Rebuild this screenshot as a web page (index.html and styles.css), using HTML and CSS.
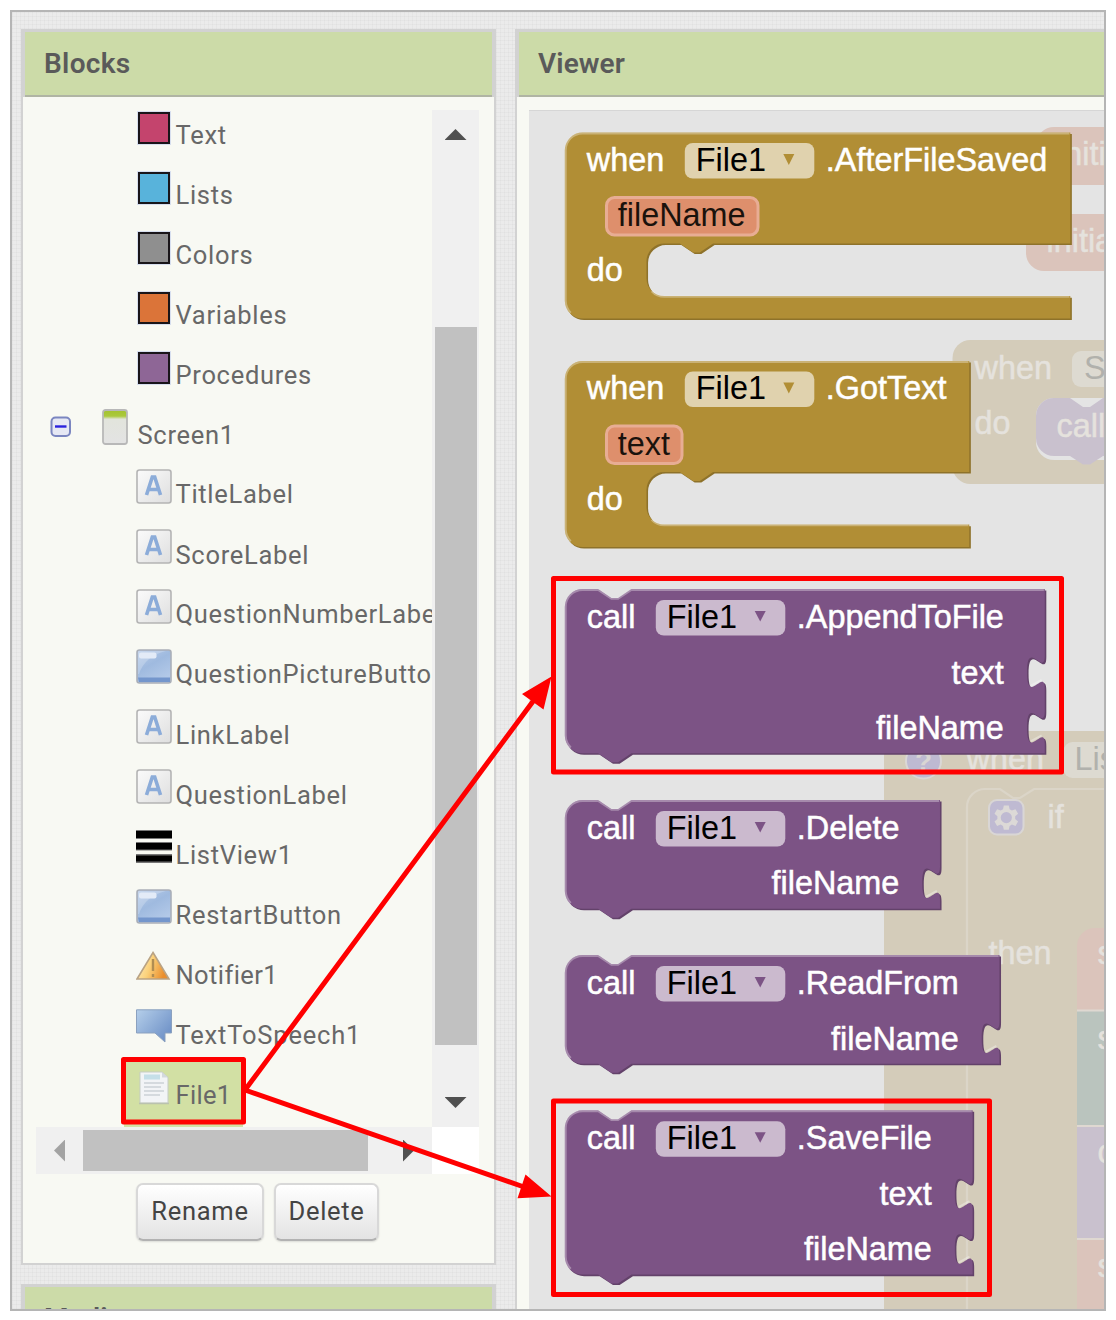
FILE: index.html
```html
<!DOCTYPE html>
<html lang="en">
<head>
<meta charset="utf-8">
<title>Blocks editor</title>
<link rel="stylesheet" href="styles.css">
</head>
<body>
<svg class="defs" width="0" height="0" aria-hidden="true">
  <defs>
    <linearGradient id="g-label" x1="0" y1="0" x2="1" y2="1"><stop offset="0" stop-color="#fbfbfb"/><stop offset="1" stop-color="#dedede"/></linearGradient>
    <linearGradient id="g-btn" x1="0" y1="0" x2="0.6" y2="1"><stop offset="0" stop-color="#b9cde9"/><stop offset=".5" stop-color="#9fbadf"/><stop offset="1" stop-color="#b3c9e8"/></linearGradient>
    <linearGradient id="g-bubble" x1="0" y1="0" x2="1" y2=".8"><stop offset="0" stop-color="#b5cfea"/><stop offset="1" stop-color="#6c8fc6"/></linearGradient>
    <linearGradient id="g-warn" x1="0" y1="0" x2="1" y2=".3"><stop offset="0" stop-color="#fff0c8"/><stop offset=".5" stop-color="#fbd27c"/><stop offset="1" stop-color="#ea8e2c"/></linearGradient>
    <linearGradient id="g-screen" x1="0" y1="0" x2="0" y2="1"><stop offset="0" stop-color="#a3c22e"/><stop offset=".18" stop-color="#abc93c"/><stop offset=".27" stop-color="#e2e4dc"/><stop offset="1" stop-color="#e3e3e3"/></linearGradient>
    <symbol id="i-label" viewBox="0 0 36 36"><rect x="1" y="1" width="34" height="33" rx="2.5" fill="url(#g-label)" stroke="#b4b4b4" stroke-width="1.6"/><path d="M10.500 26 16.300 8h2.400l5.800 18M12.500 20.500h10" fill="none" stroke="#8cacd9" stroke-width="3.600"/></symbol>
    <symbol id="i-button" viewBox="0 0 36 36"><rect x="1" y="1" width="34" height="33" rx="2.500" fill="url(#g-btn)" stroke="#aaafb8" stroke-width="1.600"/><path d="M2 2h28Q9 7 3 25H2z" fill="#fff" opacity=".22"/><path d="M2 28.500h32V33H3z" fill="#7496cc"/><rect x="3" y="3.500" width="17.500" height="6" rx="2" fill="#e3ebf7"/></symbol>
    <symbol id="i-list" viewBox="0 0 36 36"><path d="M0 1h36v9H0zM0 13h36v8.500H0zM0 25h36v9H0z" fill="#777"/><path d="M0 2h36v7H0zM0 14h36v6.500H0zM0 26.500h36v6H0z" fill="#000"/></symbol>
    <symbol id="i-warn" viewBox="0 0 36 36"><path d="M17 3.500 33 30H1z" fill="url(#g-warn)" stroke="#b9a384" stroke-width="1.600"/><path d="M17 10v12M17 25v3" stroke="#b08d52" stroke-width="2.400"/></symbol>
    <symbol id="i-bubble" viewBox="0 0 36 36"><path d="M.5.800h35V24H29v9L19 24H.5z" fill="url(#g-bubble)" stroke="#8ba1bf"/></symbol>
    <symbol id="i-file" viewBox="0 0 36 36"><path d="M4 3h22l6 5.500V34H4z" fill="#f2f4f6" stroke="#c5ccc4"/><path d="M26 3v5.500h6z" fill="#d3d9dd"/><path d="M8 5.500h16v5H8z" fill="#c5dfe8"/><path d="M8 14h20M8 18h17M8 22h20M8 26h16" stroke="#d5dade" stroke-width="2"/><path d="M3 34.500h30" stroke="#bac2af" stroke-width="1.500"/></symbol>
    <symbol id="i-screen" viewBox="0 0 26 36"><rect x="1" y="1" width="24" height="34" rx="2.500" fill="url(#g-screen)" stroke="#b8b8b8" stroke-width="1.800"/></symbol>
    <symbol id="i-minus" viewBox="0 0 22 22"><rect x="1.500" y="1.500" width="18.500" height="18.500" rx="4" fill="#e6e8f4" stroke="#7b86c0" stroke-width="2"/><path d="M5 10.500h11.500" stroke="#2a22dd" stroke-width="2.400"/></symbol>
  </defs>
</svg>

<div class="frame">
  <div class="side">
    <section class="panel blocks-panel">
      <h2 class="panel-title">Blocks</h2>
      <div class="scroller">
        <ul class="tree">
          <li class="item"><span class="swatch text"></span><span class="name">Text</span></li>
          <li class="item"><span class="swatch lists"></span><span class="name">Lists</span></li>
          <li class="item"><span class="swatch colors"></span><span class="name">Colors</span></li>
          <li class="item"><span class="swatch variables"></span><span class="name">Variables</span></li>
          <li class="item"><span class="swatch procedures"></span><span class="name">Procedures</span></li>
          <li class="item root"><svg class="toggle"><use href="#i-minus"/></svg><svg class="screen"><use href="#i-screen"/></svg><span class="name">Screen1</span></li>
          <li class="item label"><svg class="icon"><use href="#i-label"/></svg><span class="name">TitleLabel</span></li>
          <li class="item"><svg class="icon"><use href="#i-label"/></svg><span class="name">ScoreLabel</span></li>
          <li class="item label"><svg class="icon"><use href="#i-label"/></svg><span class="name">QuestionNumberLabel</span></li>
          <li class="item label"><svg class="icon"><use href="#i-button"/></svg><span class="name">QuestionPictureButton</span></li>
          <li class="item"><svg class="icon"><use href="#i-label"/></svg><span class="name">LinkLabel</span></li>
          <li class="item"><svg class="icon"><use href="#i-label"/></svg><span class="name">QuestionLabel</span></li>
          <li class="item"><svg class="icon"><use href="#i-list"/></svg><span class="name">ListView1</span></li>
          <li class="item"><svg class="icon"><use href="#i-button"/></svg><span class="name">RestartButton</span></li>
          <li class="item notifier"><svg class="icon"><use href="#i-warn"/></svg><span class="name">Notifier1</span></li>
          <li class="item speech"><svg class="icon"><use href="#i-bubble"/></svg><span class="name">TextToSpeech1</span></li>
          <li class="item selected"><svg class="icon"><use href="#i-file"/></svg><span class="name">File1</span></li>
        </ul>
        <div class="vbar"><i class="arrow up"></i><i class="vthumb"></i><i class="arrow down"></i></div>
        <div class="hbar"><i class="arrow left"></i><i class="hthumb"></i><i class="arrow right"></i></div>
        <div class="corner"></div>
      </div>
      <div class="actions"><button class="btn rename">Rename</button><button class="btn delete">Delete</button></div>
    </section>
    <section class="panel media-panel"><h2 class="panel-title">Media</h2></section>
  </div>

  <section class="panel viewer">
    <h2 class="panel-title">Viewer</h2>
    <svg class="canvas" width="575" height="1199" viewBox="529 110 575 1199">
      <rect class="canvas-bg" x="529" y="110" width="575" height="1199"/>
      <path d="M529 110.500h575" stroke="#d6d6d6"/>

      <!-- workspace blocks behind the flyout -->
      <g class="ghost">
        <path class="g-salmon" d="M1120 127h-66a18 18 0 0 0-18 18v22a18 18 0 0 0 18 18h66z"/>
        <path class="g-salmon" d="M1120 214h-76a18 18 0 0 0-18 18v21a18 18 0 0 0 18 18h76z"/>
        <text x="1057" y="165">initialize</text><text x="1046.500" y="252">initialize</text>

        <path class="g-gold" d="M1120 340H970.500a18 18 0 0 0-18 18v108a18 18 0 0 0 18 18H1120z"/>
        <text x="974.500" y="378.500">when</text><rect class="g-pill" x="1072" y="351" width="60" height="36" rx="9"/><text class="g-dark" x="1084" y="378.500">Screen1</text>
        <text x="974.500" y="434">do</text>
        <path d="M1120 398h-66a18 18 0 0 0-18 18v26a18 18 0 0 0 18 18h66z" fill="#e4e4e4"/>
        <path class="g-purple" d="M1120 398h-17l-13 9h-7l-13-9h-16a18 18 0 0 0-18 18v22a18 18 0 0 0 18 18h16l13 8.500h7l13-8.500h17z"/>
        <text x="1056.500" y="437">call</text>

        <path class="g-gold" d="M1120 731H902a18 18 0 0 0-18 18v570h236z"/>
        <circle cx="923.500" cy="761" r="17.500" fill="#bebad2" stroke="#dad7d6" stroke-width="2"/><text x="923.500" y="771" class="help">?</text>
        <text x="966.500" y="769.500">when</text><rect class="g-pill" x="1063.500" y="742" width="60" height="36" rx="9"/><text class="g-dark" x="1074.500" y="769.500">ListView1</text>
        <path d="M1120 789h-86l-14 9h-7l-13-9h-15a18 18 0 0 0-18 18v512" fill="none" stroke="#dbd5c8" stroke-width="2.200"/>
        <rect x="989" y="800" width="34.500" height="34.500" rx="8" fill="#bfbad2" stroke="#d9d6d5" stroke-width="2"/>
        <path d="M1003.800 805.500h5l.8 3.800 2.300 1.300 3.600-1.300 2.600 4.400-2.900 2.500v2.800l2.900 2.500-2.600 4.400-3.600-1.300-2.300 1.300-.8 3.800h-5l-.8-3.800-2.300-1.300-3.600 1.300-2.600-4.400 2.900-2.500v-2.800l-2.900-2.500 2.600-4.400 3.600 1.300 2.300-1.300zM1006.300 812a5.600 5.600 0 1 0 0 11.200 5.600 5.600 0 1 0 0-11.200z" fill="#dcd9d7" fill-rule="evenodd"/>
        <text x="1047.500" y="827.500">if</text><text x="988.500" y="964">then</text>
        <path class="g-salmon" d="M1120 928h-25a18 18 0 0 0-18 18v64h43z"/>
        <path class="g-teal" d="M1077 1010h43v116h-43z"/>
        <path class="g-purple" d="M1077 1126h43v113h-43z"/>
        <path class="g-salmon" d="M1077 1239h43v80h-43z"/>
        <path d="M1077 1010.500h30M1077 1126h30M1077 1239h30" stroke="#dfd8d1" stroke-width="2"/>
        <text x="1097.500" y="964">set</text><text x="1097.500" y="1049">set</text><text x="1097.500" y="1163">call</text><text x="1097.500" y="1277">set</text>
      </g>

      <g class="event" transform="translate(564.800 132.500)">
        <g transform="scale(2.220)">
          <path class="dark" transform="translate(.7 .7)" d="M0 8a8 8 0 0 1 8-8H227.700V50H66.800l-6 4h-3l-6-4h-7a8 8 0 0 0-8 8v7.700a8 8 0 0 0 8 8H227.700V83.800H8a8 8 0 0 1-8-8z"/>
          <path class="main" d="M0 8a8 8 0 0 1 8-8H227.700V50H66.800l-6 4h-3l-6-4h-7a8 8 0 0 0-8 8v7.700a8 8 0 0 0 8 8H227.700V83.800H8a8 8 0 0 1-8-8z"/>
          <path class="light" d="M2.700 81.200A8 8 0 0 1 .4 75.800V8A7.600 7.600 0 0 1 8 .4H227.300M39.100 71.500a8 8 0 0 0 5.700 2.500H227.300"/>
        </g>
        <text x="22" y="38.200">when</text><rect class="pill" x="120" y="10.500" width="129.500" height="35.500" rx="8"/><text class="field" x="131" y="38.200">File1</text><path class="caret" d="M218.500 21.500h11l-5.500 11z"/><text x="261" y="38.200">.AfterFileSaved</text>
        <rect class="param" x="41.700" y="65" width="151.500" height="37.500" rx="8"/><text class="ptext" x="53" y="93.500">fileName</text>
        <text x="22" y="148.500">do</text>
      </g>

      <g class="event" transform="translate(564.800 361)">
        <g transform="scale(2.220)">
          <path class="dark" transform="translate(.7 .7)" d="M0 8a8 8 0 0 1 8-8H182.200V50H66.800l-6 4h-3l-6-4h-7a8 8 0 0 0-8 8v7.700a8 8 0 0 0 8 8H182.200V83.800H8a8 8 0 0 1-8-8z"/>
          <path class="main" d="M0 8a8 8 0 0 1 8-8H182.200V50H66.800l-6 4h-3l-6-4h-7a8 8 0 0 0-8 8v7.700a8 8 0 0 0 8 8H182.200V83.800H8a8 8 0 0 1-8-8z"/>
          <path class="light" d="M2.700 81.200A8 8 0 0 1 .4 75.800V8A7.600 7.600 0 0 1 8 .4H181.800M39.100 71.500a8 8 0 0 0 5.700 2.500H181.800"/>
        </g>
        <text x="22" y="38.200">when</text><rect class="pill" x="120" y="10.500" width="129.500" height="35.500" rx="8"/><text class="field" x="131" y="38.200">File1</text><path class="caret" d="M218.500 21.500h11l-5.500 11z"/><text x="261" y="38.200">.GotText</text>
        <rect class="param" x="41.700" y="65" width="75.500" height="37.500" rx="8"/><text class="ptext" x="53" y="93.500">text</text>
        <text x="22" y="148.500">do</text>
      </g>

      <g class="call" transform="translate(564.800 589)">
        <g transform="scale(2.220)">
          <path class="dark" transform="translate(.7 .7)" d="M0 8a8 8 0 0 1 8-8h7l6 4h3l6-4H216.200V30c0 10-8-8-8 7.500s8-2.500 8 7.500V55c0 10-8-8-8 7.500s8-2.500 8 7.500V74H30l-6 4h-3l-6-4H8a8 8 0 0 1-8-8z"/>
          <path class="main" d="M0 8a8 8 0 0 1 8-8h7l6 4h3l6-4H216.200V30c0 10-8-8-8 7.500s8-2.500 8 7.500V55c0 10-8-8-8 7.500s8-2.500 8 7.500V74H30l-6 4h-3l-6-4H8a8 8 0 0 1-8-8z"/>
          <path class="light" d="M2.700 71.400A8 8 0 0 1 .4 66V8A7.600 7.600 0 0 1 8 .4h7l6 4h3l6-4H215.800M210 43.500l4.800-2.600M210 68.500l4.800-2.600"/>
        </g>
        <text x="22" y="38.700">call</text><rect class="pill" x="91" y="11" width="129.500" height="35.500" rx="8"/><text class="field" x="102" y="38.700">File1</text><path class="caret" d="M189.900 22h11l-5.500 10.500z"/><text x="232" y="38.700">.AppendToFile</text>
        <text class="end" x="439" y="94.500">text</text><text class="end" x="439" y="149.700">fileName</text>
      </g>

      <g class="call" transform="translate(564.800 800)">
        <g transform="scale(2.220)">
          <path class="dark" transform="translate(.7 .7)" d="M0 8a8 8 0 0 1 8-8h7l6 4h3l6-4H169V30c0 10-8-8-8 7.500s8-2.500 8 7.500V49H30l-6 4h-3l-6-4H8a8 8 0 0 1-8-8z"/>
          <path class="main" d="M0 8a8 8 0 0 1 8-8h7l6 4h3l6-4H169V30c0 10-8-8-8 7.500s8-2.500 8 7.500V49H30l-6 4h-3l-6-4H8a8 8 0 0 1-8-8z"/>
          <path class="light" d="M2.700 46.400A8 8 0 0 1 .4 41V8A7.600 7.600 0 0 1 8 .4h7l6 4h3l6-4H168.600M162.800 43.500l4.800-2.600"/>
        </g>
        <text x="22" y="38.700">call</text><rect class="pill" x="91" y="11" width="129.500" height="35.500" rx="8"/><text class="field" x="102" y="38.700">File1</text><path class="caret" d="M189.900 22h11l-5.500 10.500z"/><text x="232" y="38.700">.Delete</text>
        <text class="end" x="334.500" y="94.200">fileName</text>
      </g>

      <g class="call" transform="translate(564.800 955)">
        <g transform="scale(2.220)">
          <path class="dark" transform="translate(.7 .7)" d="M0 8a8 8 0 0 1 8-8h7l6 4h3l6-4H195.800V30c0 10-8-8-8 7.500s8-2.500 8 7.500V49H30l-6 4h-3l-6-4H8a8 8 0 0 1-8-8z"/>
          <path class="main" d="M0 8a8 8 0 0 1 8-8h7l6 4h3l6-4H195.800V30c0 10-8-8-8 7.500s8-2.500 8 7.500V49H30l-6 4h-3l-6-4H8a8 8 0 0 1-8-8z"/>
          <path class="light" d="M2.700 46.400A8 8 0 0 1 .4 41V8A7.600 7.600 0 0 1 8 .4h7l6 4h3l6-4H195.400M189.600 43.500l4.800-2.600"/>
        </g>
        <text x="22" y="38.700">call</text><rect class="pill" x="91" y="11" width="129.500" height="35.500" rx="8"/><text class="field" x="102" y="38.700">File1</text><path class="caret" d="M189.900 22h11l-5.500 10.500z"/><text x="232" y="38.700">.ReadFrom</text>
        <text class="end" x="394" y="94.500">fileName</text>
      </g>

      <g class="call" transform="translate(564.800 1110.300)">
        <g transform="scale(2.220)">
          <path class="dark" transform="translate(.7 .7)" d="M0 8a8 8 0 0 1 8-8h7l6 4h3l6-4H183.700V30c0 10-8-8-8 7.500s8-2.500 8 7.500V55c0 10-8-8-8 7.500s8-2.500 8 7.500V74H30l-6 4h-3l-6-4H8a8 8 0 0 1-8-8z"/>
          <path class="main" d="M0 8a8 8 0 0 1 8-8h7l6 4h3l6-4H183.700V30c0 10-8-8-8 7.500s8-2.500 8 7.500V55c0 10-8-8-8 7.500s8-2.500 8 7.500V74H30l-6 4h-3l-6-4H8a8 8 0 0 1-8-8z"/>
          <path class="light" d="M2.700 71.400A8 8 0 0 1 .4 66V8A7.600 7.600 0 0 1 8 .4h7l6 4h3l6-4H183.300M177.500 43.500l4.800-2.600M177.500 68.500l4.800-2.600"/>
        </g>
        <text x="22" y="38.700">call</text><rect class="pill" x="91" y="11" width="129.500" height="35.500" rx="8"/><text class="field" x="102" y="38.700">File1</text><path class="caret" d="M189.900 22h11l-5.500 10.500z"/><text x="232" y="38.700">.SaveFile</text>
        <text class="end" x="367" y="94.300">text</text><text class="end" x="367" y="149.500">fileName</text>
      </g>
    </svg>
  </section>
</div>

<svg class="annotations" width="1116" height="1320" viewBox="0 0 1116 1320">
  <g fill="none" stroke="#f00" stroke-width="5" stroke-linejoin="round">
    <rect x="123.500" y="1059.500" width="120" height="62.500"/>
    <rect x="553.500" y="578.500" width="508" height="193.500"/>
    <rect x="553.500" y="1101" width="436" height="193.500"/>
    <path d="M245 1090 534 700M245 1090 524 1187"/>
  </g>
  <path d="M551.500 676.500 543.500 709.500 522 694zM551.500 1196.500 525.500 1174.500 517.500 1198.200z" fill="#f00"/>
</svg>
</body>
</html>
```

FILE: styles.css
```css
* { box-sizing: border-box; }
body { margin: 0; padding: 10px; background: #fff; width: 1116px; height: 1320px; overflow: hidden; position: relative; font-family: Roboto, "Liberation Sans", sans-serif; }
.defs { position: absolute; }

.frame {
  width: 1096px; height: 1301px; border: 2px solid #b5b5b5; padding: 17px 0 0 9px;
  display: flex; gap: 19px; overflow: hidden;
  background:
    repeating-linear-gradient(90deg, rgba(0,0,0,.022) 0 1px, transparent 1px 4px),
    repeating-linear-gradient(0deg, rgba(0,0,0,.022) 0 1px, transparent 1px 4px),
    #ebebeb;
}
.side { flex: none; width: 475px; display: flex; flex-direction: column; gap: 19px; }

.panel { flex: none; background: #f8f9f3; border: 2px solid #d2d2d2; border-top-width: 3px; display: flex; flex-direction: column; }
.panel-title {
  flex: none; margin: 0; height: 65px; padding-left: 19px; line-height: 63px;
  background: #ccdba8; border: solid #d2d2d2; border-width: 0 2px; box-shadow: inset 0 -2px #b0b5a4;
  font-size: 28px; font-weight: 600; color: #5a5a5a; letter-spacing: .3px;
}
.viewer .panel-title { letter-spacing: .1px; }
.blocks-panel { height: 1236px; }
.media-panel { height: 120px; }
.media-panel .panel-title { line-height: 63px; }

.scroller { margin: 13px 0 0 13px; width: 443px; height: 1064px; display: grid; grid-template: 1017px 47px / 396px 47px; }
.tree { list-style: none; margin: 0; padding: 0; overflow: hidden; }
.item { height: 60px; padding-left: 100px; display: flex; align-items: flex-start; white-space: nowrap; }
.name { font-size: 25.500px; line-height: 30px; letter-spacing: .7px; color: #686868; margin: 10px 0 0 3.500px; }
.label .name { margin-top: 9px; }
.notifier .name { letter-spacing: .4px; }
.speech .name { letter-spacing: .8px; }
.icon { flex: none; width: 36px; height: 36px; margin-top: -1px; }
.swatch { flex: none; width: 32px; height: 32px; margin: 1.500px 2.500px 0 1.500px; border: 2.500px solid #191519; box-shadow: 0 0 0 1px #d7dfef; }
.text { background: #c4446d; }
.lists { background: #58b3db; }
.colors { background: #8f8f8f; }
.variables { background: #db7439; }
.procedures { background: #8e6696; }
.root { padding-left: 14px; }
.toggle { width: 22px; height: 22px; margin-top: 6px; }
.screen { width: 26px; height: 36px; margin: -1px 6px 0 30px; }
.selected { width: fit-content; height: 70px; margin: -10px 0 0 88px; padding: 10px 12px 0; background: #d2e0a4; }
.selected .name { letter-spacing: .3px; }

.vbar { background: #f0f0f0; display: flex; flex-direction: column; align-items: center; }
.hbar { background: #f0f0f0; display: flex; align-items: center; }
.corner { background: #fff; }
.vthumb { width: 42px; height: 718px; background: #c1c1c1; margin-top: 187px; }
.hthumb { width: 285px; height: 41px; background: #c1c1c1; margin-left: 18px; }
.arrow { width: 22px; height: 11px; background: #505050; }
.up { margin-top: 19px; clip-path: polygon(50% 0, 100% 100%, 0 100%); }
.down { margin-top: 52px; clip-path: polygon(0 0, 100% 0, 50% 100%); }
.left, .right { width: 11px; height: 22px; }
.left { margin-left: 18px; background: #a3a3a3; clip-path: polygon(100% 0, 100% 100%, 0 50%); }
.right { margin-left: 35px; clip-path: polygon(0 0, 100% 50%, 0 100%); }

.actions { display: flex; gap: 10px; padding: 9px 0 0 113px; }
.btn {
  height: 58px; padding: 0 0 2px; border: 2px solid #d8d8d8; border-bottom: 2px solid #b2b2b2; border-radius: 7px;
  background: linear-gradient(#fff, #e3e3e3); box-shadow: 0 1px 2px rgba(0,0,0,.12);
  font: 25.500px Roboto, "Liberation Sans", sans-serif; letter-spacing: .7px; color: #444;
}
.rename { width: 128px; }
.delete { width: 105px; }

.viewer { width: 620px; height: 1320px; }
.canvas { flex: none; margin: 13px 0 0 12px; display: block; }
.canvas-bg { fill: #e4e4e4; }
.canvas text { font: 32.400px "Liberation Sans", Arial, sans-serif; fill: #fff; stroke: #fff; stroke-width: .5px; }
.canvas .end { text-anchor: end; }
.canvas .field { fill: #000; stroke: none; }
.canvas .ptext { fill: #1a120c; stroke: none; }
.event .main, .event .caret { fill: #b18e35; }
.event .dark { fill: #8e722a; }
.event .pill { fill: #e0d2ae; }
.call .main, .call .caret { fill: #7c5385; }
.call .dark { fill: #63426a; }
.call .pill { fill: #cbbace; }
.light { fill: none; stroke: #fff; stroke-opacity: .32; stroke-width: .9; }
.param { fill: #de8f6c; stroke: #e8ad94; stroke-width: 3; }

.canvas .ghost text { fill: #e5e2dd; stroke: #e5e2dd; }
.canvas .ghost .g-dark { fill: #b1b1ac; stroke: none; }
.canvas .ghost .help { text-anchor: middle; font-size: 28px; font-weight: bold; fill: #d9d6d3; stroke: none; }
.g-salmon { fill: #dbc4bb; }
.g-gold { fill: #d4ccba; }
.g-purple { fill: #c9c1ce; }
.g-teal { fill: #bac4be; }
.g-pill { fill: #dddad1; }

.annotations { position: absolute; left: 0; top: 0; pointer-events: none; }
```
